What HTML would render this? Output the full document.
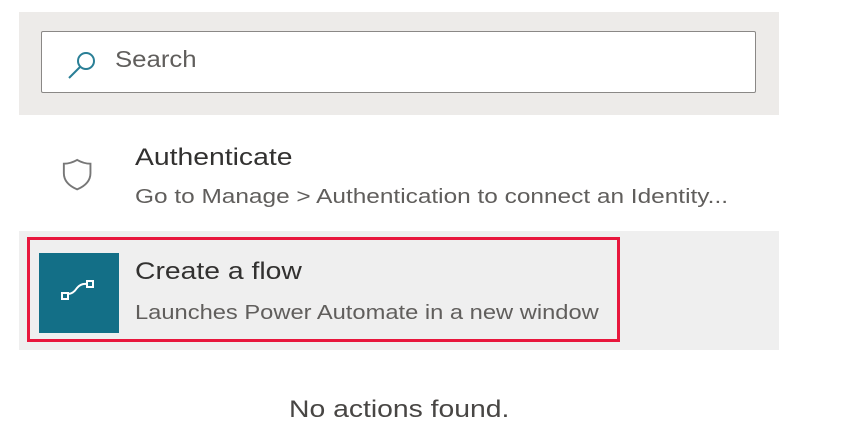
<!DOCTYPE html>
<html><head><style>
body{margin:0;width:854px;height:448px;background:#fff;font-family:"Liberation Sans",sans-serif;position:relative;overflow:hidden}
.a{position:absolute;white-space:nowrap;transform-origin:0 50%}
</style></head><body>
<div class="a" style="left:19px;top:12px;width:760px;height:103px;background:#edebe9"></div>
<div class="a" style="left:41px;top:31px;width:713px;height:60px;background:#fff;border:1px solid #8a8886;border-radius:2px"></div>
<svg class="a" style="left:66px;top:48px" width="36" height="36" viewBox="0 0 36 36"><circle cx="20" cy="13" r="8" fill="none" stroke="#2a7f96" stroke-width="2"/><line x1="14" y1="19" x2="3" y2="30" stroke="#2a7f96" stroke-width="2"/></svg>
<div class="a" style="left:115px;top:46px;font-size:23px;color:#605e5c;transform:scaleX(1.12)">Search</div>
<svg class="a" style="left:60px;top:158px" width="36" height="36" viewBox="0 0 36 36"><path d="M3 6 Q10 6 17 2 Q24 6 31 6 L31 16 Q31 27 17 33 Q3 27 3 16 Z" fill="none" stroke="#777" stroke-width="2" transform="translate(1,0) scale(0.95)"/></svg>
<div class="a" style="left:135px;top:144px;font-size:24px;color:#323130;transform:scaleX(1.18)">Authenticate</div>
<div class="a" style="left:135px;top:186px;font-size:20px;color:#605e5c;transform:scaleX(1.22)">Go to Manage &gt; Authentication to connect an Identity...</div>
<div class="a" style="left:19px;top:231px;width:760px;height:119px;background:#efefef"></div>
<div class="a" style="left:27px;top:237px;width:587px;height:99px;border:3px solid #e8173d"></div>
<div class="a" style="left:39px;top:253px;width:80px;height:80px;background:#136f87"></div>
<svg class="a" style="left:60px;top:278px" width="40" height="30" viewBox="0 0 40 30"><rect x="2" y="15" width="6" height="6" fill="none" stroke="#fff" stroke-width="2"/><rect x="27" y="3" width="6" height="6" fill="none" stroke="#fff" stroke-width="2"/><path d="M8 16 Q13 16 17 10 Q21 5 27 6" fill="none" stroke="#fff" stroke-width="2"/></svg>
<div class="a" style="left:135px;top:258px;font-size:24px;color:#323130;transform:scaleX(1.18)">Create a flow</div>
<div class="a" style="left:135px;top:302px;font-size:20px;color:#605e5c;transform:scaleX(1.185)">Launches Power Automate in a new window</div>
<div class="a" style="left:289px;top:396px;font-size:24px;color:#484644;transform:scaleX(1.18)">No actions found.</div>
</body></html>
